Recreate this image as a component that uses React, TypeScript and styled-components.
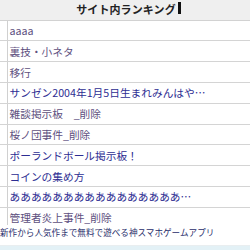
import React from "react";
import styled, { createGlobalStyle } from "styled-components";

const GlobalStyle = createGlobalStyle`
  html, body {
    margin: 0;
    padding: 0;
    background: #fff;
    overflow: hidden;
  }
  body {
    font-family: "Noto Sans CJK JP", "Noto Sans", sans-serif;
  }
`;

const Page = styled.div`
  position: relative;
  width: 250px;
  height: 250px;
  overflow: hidden;
  background: #fff;
`;

const Header = styled.div`
  position: relative;
  height: 20.7px;
  box-sizing: border-box;
  display: flex;
  align-items: center;
  justify-content: center;
  background: #efefef;
  border-bottom: 1px solid #d2d2d2;
  h2 {
    margin: 0;
    font-size: 11px;
    font-weight: 700;
    color: #222;
    line-height: 1;
    letter-spacing: 0.1px;
    padding-left: 2px;
  }
`;

const Caret = styled.span`
  position: absolute;
  left: 178px;
  top: 2px;
  width: 2.5px;
  height: 12px;
  background: #111;
`;

const List = styled.ul`
  margin: 0;
  padding: 0;
  list-style: none;
`;

const Row = styled.li`
  display: flex;
  height: 20.8px;
  box-sizing: border-box;
  border-bottom: 1px solid #d4d4d4;
  .gutter {
    width: 7px;
    flex: none;
    border-right: 1px solid #d0d0d0;
  }
`;

const Item = styled.a<{ $visited?: boolean }>`
  display: flex;
  align-items: center;
  padding-left: 1.5px;
  font-size: 10.7px;
  white-space: nowrap;
  color: ${(p) => (p.$visited ? "#5e5080" : "#2d2d92")};
  text-decoration: none;
`;

const Banner = styled.div`
  position: absolute;
  left: 0;
  right: 0;
  bottom: 0;
  height: 25px;
  display: flex;
  flex-direction: column;
  background: #fff;
  span {
    display: block;
    padding-top: 1px;
    font-size: 8.6px;
    line-height: 12px;
    color: #1f2c6a;
    white-space: nowrap;
  }
`;

const BannerBar = styled.div`
  margin-top: auto;
  height: 4px;
  background: #e3f1f6;
  border-top: 1px solid #e9eef0;
`;

const items: { title: string; visited: boolean }[] = [
  { title: "aaaa", visited: true },
  { title: "裏技・小ネタ", visited: true },
  { title: "移行", visited: true },
  { title: "サンゼン2004年1月5日生まれみんはや…", visited: false },
  { title: "雑談掲示板　_削除", visited: true },
  { title: "桜ノ団事件_削除", visited: true },
  { title: "ポーランドボール掲示板！", visited: false },
  { title: "コインの集め方", visited: false },
  { title: "あ".repeat(16) + "…", visited: false },
  { title: "管理者炎上事件_削除", visited: true },
];

export default function App() {
  return (
    <Page>
      <GlobalStyle />
      <Header>
        <h2>サイト内ランキング</h2>
        <Caret />
      </Header>
      <List>
        {items.map((item) => (
          <Row key={item.title}>
            <div className="gutter" />
            <Item href="#" $visited={item.visited}>
              {item.title}
            </Item>
          </Row>
        ))}
      </List>
      <Banner>
        <span>新作から人気作まで無料で遊べる神スマホゲームアプリ</span>
        <BannerBar />
      </Banner>
    </Page>
  );
}
